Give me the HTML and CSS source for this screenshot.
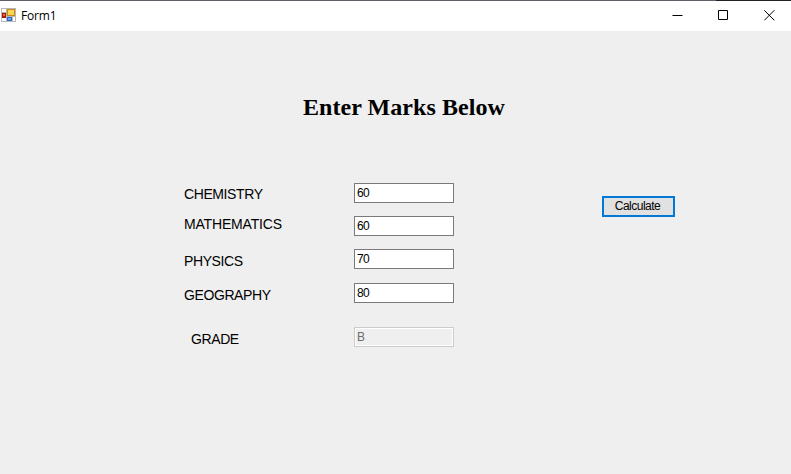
FILE: index.html
```html
<!DOCTYPE html>
<html lang="en">
<head>
<meta charset="utf-8">
<title>Form1</title>
<link rel="stylesheet" href="styles.css">
</head>
<body>
<div class="window">
  <header class="titlebar">
    <svg class="app-icon" width="15" height="14" viewBox="0 0 15 14" shape-rendering="crispEdges">
      <path fill="#b8b8b8" d="M0 0h15v14H0z"/>
      <path fill="#fff" d="M1 1h4v3H1zM1 10h4v3H1zM12 9h2v4h-2z"/>
      <path fill="#a81c10" d="M1 5h4v5H1z"/>
      <path fill="#e8604c" d="M2 6h2v2H2z"/>
      <path fill="#c88a08" d="M6 1h8v7H6z"/>
      <path fill="#ffd450" d="M7 2h6v5H7z"/>
      <path fill="#3268c8" d="M6 9h5v4H6z"/>
      <path fill="#6ca4f4" d="M7 10h3v2H7z"/>
    </svg>
    <span class="title">Form1</span>
    <div class="controls">
      <svg width="11" height="11" viewBox="0 0 11 11"><path d="M.5 5.5h10"/></svg>
      <svg width="11" height="11" viewBox="0 0 11 11"><path d="M.5 .5h9v9h-9z"/></svg>
      <svg width="11" height="11" viewBox="0 0 11 11"><path d="M.3 .3l10 10M10.3 .3l-10 10"/></svg>
    </div>
  </header>
  <main class="client">
    <h1 class="heading">Enter Marks Below</h1>
    <form class="form">
      <div class="labels">
        <label for="chem">CHEMISTRY</label>
        <label for="math">MATHEMATICS</label>
        <label for="phys">PHYSICS</label>
        <label for="geo">GEOGRAPHY</label>
        <label for="grade">GRADE</label>
      </div>
      <div class="fields">
        <input id="chem" value="60">
        <input id="math" value="60">
        <input id="phys" value="70">
        <input id="geo" value="80">
        <input id="grade" value="B" disabled>
      </div>
      <button class="calculate" type="button">Calculate</button>
    </form>
  </main>
</div>
</body>
</html>
```
FILE: styles.css
```css
* { box-sizing: border-box; }
body { margin: 0; background: #efefef; overflow: hidden; }
.window {
  height: 474px;
  padding-top: 1px;
  background: linear-gradient(90deg, #5f6068 0 716px, #222226 716px) 0 0 / 100% 1px no-repeat;
  font-family: "Liberation Sans", Arial, sans-serif;
  color: #000;
}
.titlebar {
  display: flex;
  align-items: center;
  height: 30px;
  padding: 0 16px 0 1px;
  background: #fff;
}
.app-icon { margin-top: -2px; }
.title {
  margin-left: 5px;
  font: 12px/16px "Open Sans", "Noto Sans", sans-serif;
  letter-spacing: -0.2px;
}
.controls {
  display: flex;
  gap: 35px;
  margin-left: auto;
  margin-top: -1px;
}
.controls path { fill: none; stroke: #000; stroke-width: 1; }
.heading {
  margin: 0;
  padding: 61px 0 0 303px;
  font: bold 24px/30px "Liberation Serif", "Times New Roman", serif;
  letter-spacing: 0.06px;
  white-space: nowrap;
}
.form {
  display: flex;
  align-items: flex-start;
  margin-top: 61px;
  padding-left: 184px;
}
.labels {
  display: flex;
  flex-direction: column;
  width: 170px;
  padding-top: 3px;
  font-size: 14px;
  line-height: 16px;
  letter-spacing: -0.4px;
}
.labels label:nth-child(2) { margin-top: 14px; letter-spacing: -0.17px; }
.labels label:nth-child(3) { margin-top: 21px; }
.labels label:nth-child(4) { margin-top: 18px; }
.labels label:nth-child(5) { margin: 28px 0 0 7px; }
.fields {
  display: flex;
  flex-direction: column;
  gap: 13px;
}
.fields input {
  width: 100px;
  height: 20px;
  margin: 0;
  padding: 0 2px;
  border: 1px solid #7a7a7a;
  border-radius: 0;
  background: #fff;
  color: #000;
  font: 12px "Liberation Sans", Arial, sans-serif;
  letter-spacing: -0.6px;
}
#geo { margin-top: 1px; }
#grade {
  margin-top: 11px;
  border-color: #ccc;
  background: #efefef;
  box-shadow: inset 0 0 0 1px #fff;
  color: #6d6d6d;
}
.calculate {
  width: 73px;
  height: 21px;
  margin: 13px 0 0 148px;
  padding: 0 2px 1px 0;
  border: 2px solid #0078d7;
  border-radius: 0;
  background: #e1e1e1;
  color: #000;
  font: 12px "Liberation Sans", Arial, sans-serif;
  letter-spacing: -0.5px;
}
```
